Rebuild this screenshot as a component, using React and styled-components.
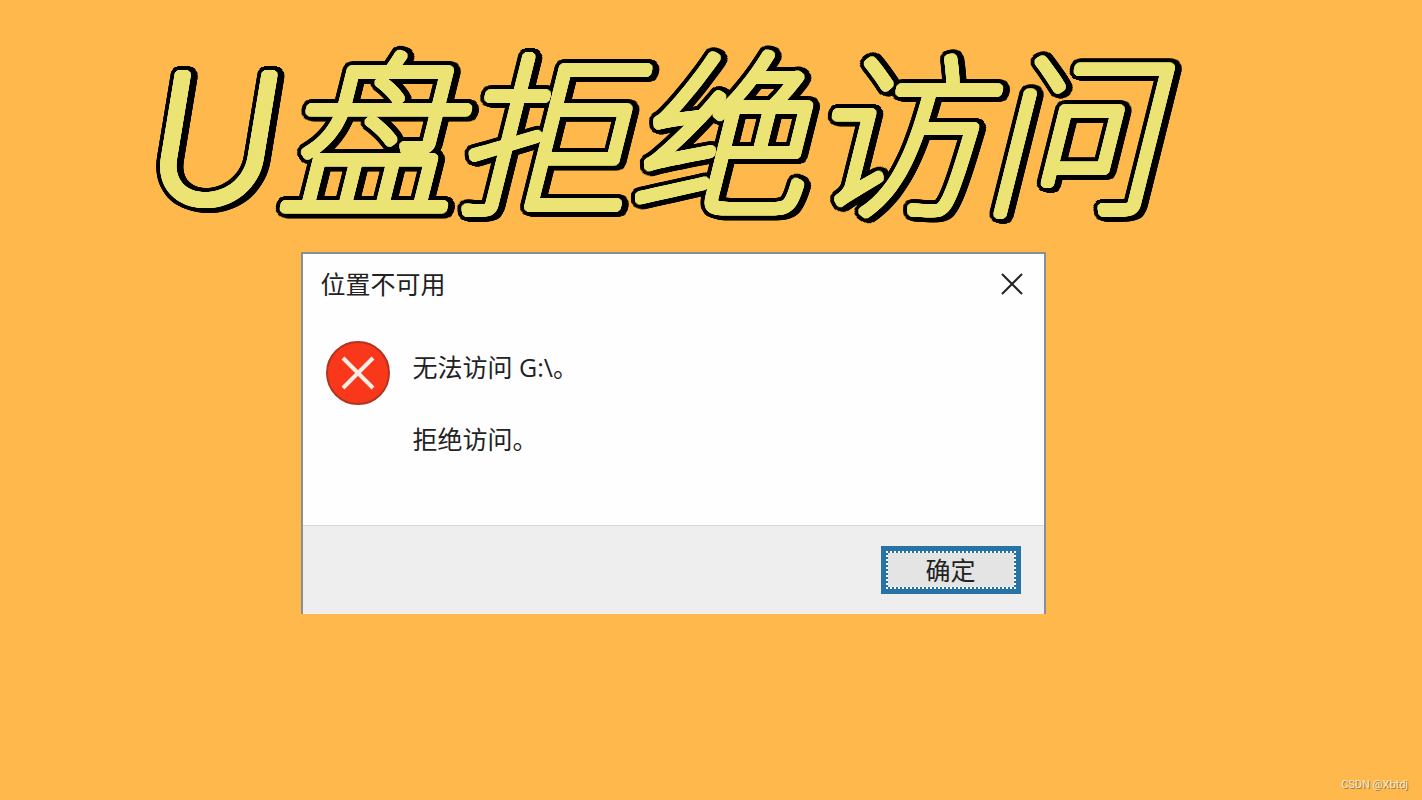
import styled, { createGlobalStyle } from 'styled-components';

const GlobalStyle = createGlobalStyle`
    *{
        box-sizing: border-box;
    }
    body{
        background-color: #ffb84b;
        font-family: 'Open Sans', 'Noto Sans CJK SC', sans-serif;
        margin: 0;
    }
`

/* yellow ring rounds the stroke ends, black rings draw the outline and its depth */
const ring = (color, x, y, radius) => Array.from({ length: 32 }, (_, i) => {
    const angle = (i * Math.PI) / 16;
    return `${(x + radius * Math.cos(angle)).toFixed(2)}px ${(y + radius * Math.sin(angle)).toFixed(2)}px 0 ${color}`;
});
const outline = [
    ...ring('#ebe474', 0, 0, 4),
    ...ring('#000', 0, 0, 8),
    ...ring('#000', 2, 0, 8),
    ...ring('#000', 3, 1, 8),
].join(', ');

const Page = styled.div`
    display: flex;
    flex-direction: column;
    min-height: 100vh;
`

const Content = styled.main`
    align-items: center;
    display: flex;
    flex: 1;
    flex-direction: column;
    gap: 22px;
    padding: 46px 76px 0 0;
`

const Title = styled.h1`
    color: #ebe474;
    font-family: Inter, 'Noto Sans CJK SC', sans-serif;
    font-size: 176px;
    font-style: italic;
    font-weight: 100;
    line-height: 184px;
    margin: 0;
    padding-right: 40px;
    text-shadow: ${outline};
    white-space: nowrap;
    span{
        font-weight: 200;
    }
`

const DialogStyled = styled.section`
    background-color: #fefefe;
    border: 2px solid #8a8f96;
    border-bottom: none;
    color: #222;
    font-size: 25px;
    line-height: 36px;
    max-width: 745px;
    width: 100%;
`

const DialogHeader = styled.header`
    align-items: center;
    display: flex;
    height: 60px;
    justify-content: space-between;
    padding: 0 18px;
`

const DialogTitle = styled.h2`
    font-size: 25px;
    font-weight: 400;
    margin: 0;
`

const CloseButton = styled.button`
    background: none;
    border: none;
    display: flex;
    padding: 2px;
`

const DialogBody = styled.div`
    display: flex;
    gap: 23px;
    padding: 27px 23px 68px;
`

const Message = styled.div`
    display: flex;
    flex-direction: column;
    gap: 36px;
    padding-top: 8px;
    p{
        margin: 0;
    }
`

const DialogFooter = styled.footer`
    background-color: #eeeeee;
    border-top: 1px solid #d9d9d9;
    display: flex;
    justify-content: flex-end;
    padding: 20px 23px;
`

const OkButton = styled.button`
    background-color: #2873a6;
    border: none;
    color: #222;
    font-family: inherit;
    font-size: 25px;
    height: 48px;
    line-height: 36px;
    padding: 5px;
    width: 140px;
    span{
        background-color: #e4e4e4;
        border: 2px dotted #fff;
        background-clip: padding-box;
        display: block;
        height: 38px;
        line-height: 34px;
    }
`

const Credit = styled.footer`
    color: #f5e8d2;
    font-family: Roboto, sans-serif;
    font-size: 11px;
    line-height: 14px;
    padding: 0 14px 8px;
    text-align: right;
    text-shadow: 1px 1px 0 #a37a3c;
`

function CloseIcon(){
    return(
        <svg width="24" height="24" viewBox="0 0 24 24" aria-hidden="true">
            <path d="M2 2 L22 22 M22 2 L2 22" stroke="#222" strokeWidth="2" fill="none" />
        </svg>
    )
}

function ErrorIcon(){
    return(
        <svg width="64" height="64" viewBox="0 0 64 64" role="img" aria-label="错误">
            <circle cx="32" cy="32" r="31" fill="#f9381b" stroke="#b4331f" strokeWidth="2" />
            <path d="M17 17 L47 47 M47 17 L17 47" stroke="#fbeee6" strokeWidth="4" fill="none" />
        </svg>
    )
}

function Dialog(){
    return(
        <DialogStyled role="alertdialog" aria-labelledby="dialog-title">
            <DialogHeader>
                <DialogTitle id="dialog-title">位置不可用</DialogTitle>
                <CloseButton type="button" aria-label="关闭">
                    <CloseIcon />
                </CloseButton>
            </DialogHeader>
            <DialogBody>
                <ErrorIcon />
                <Message>
                    <p>无法访问 G:\。</p>
                    <p>拒绝访问。</p>
                </Message>
            </DialogBody>
            <DialogFooter>
                <OkButton type="button"><span>确定</span></OkButton>
            </DialogFooter>
        </DialogStyled>
    )
}

export default function App(){
    return(
        <Page>
            <GlobalStyle />
            <Content>
                <Title><span>U</span>盘拒绝访问</Title>
                <Dialog />
            </Content>
            <Credit>CSDN @Xbtdj</Credit>
        </Page>
    )
}
